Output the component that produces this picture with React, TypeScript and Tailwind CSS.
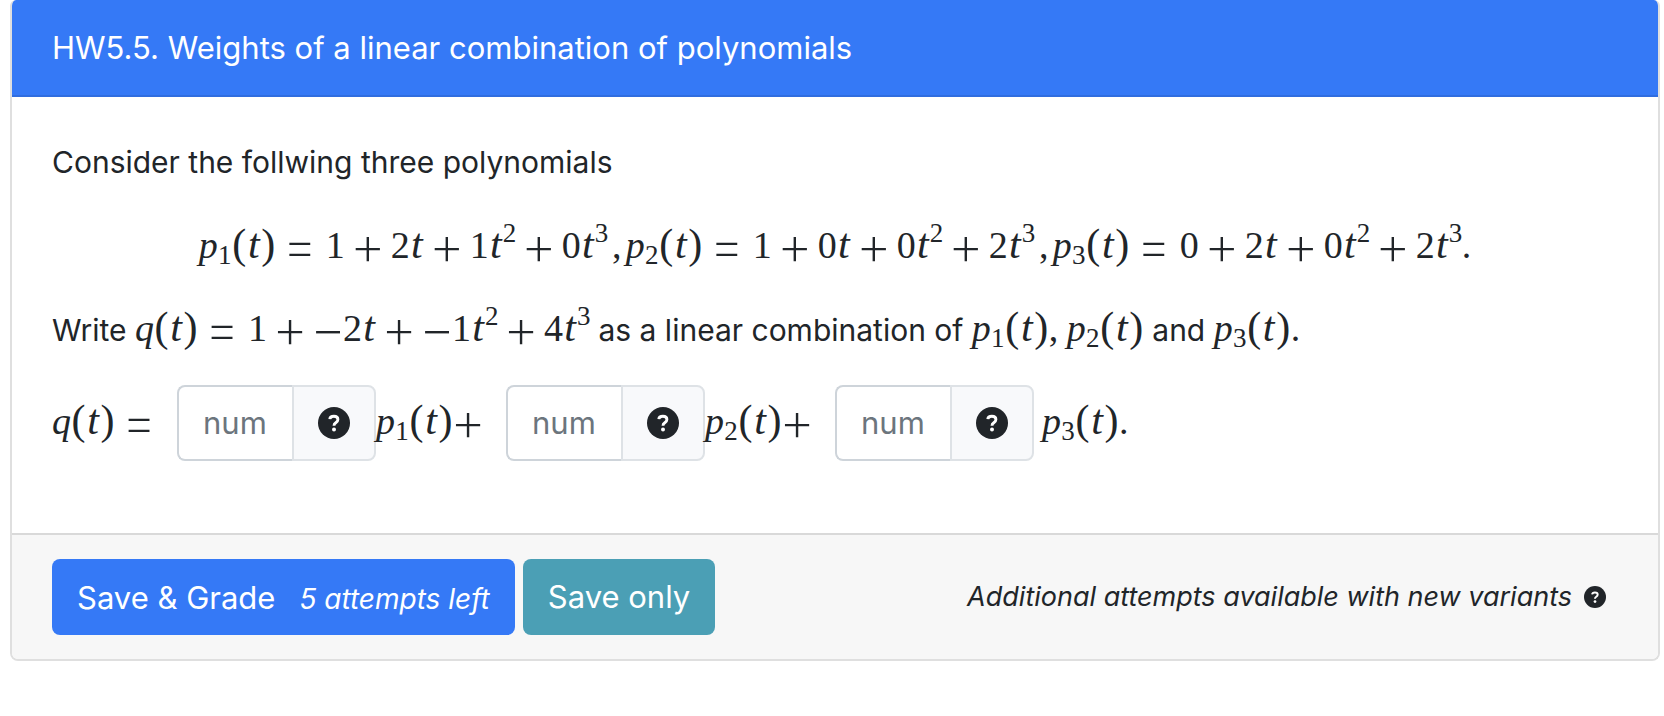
import React from 'react';

// Math glyphs are set in a serif face, each one in a box as wide as its TeX advance
function Digit({ children }: { children: React.ReactNode }) {
  return <span className="inline-block w-[19px] text-center">{children}</span>;
}

function VarT() {
  return <span className="inline-block w-[14px] text-center text-[42px] leading-none italic">t</span>;
}

function Paren({ children }: { children: React.ReactNode }) {
  return <span className="inline-block w-[15px] text-center text-[42px] leading-none">{children}</span>;
}

function Exp({ children }: { children: React.ReactNode }) {
  return <span className="inline-block w-[13px] text-center align-[16px] text-[27px] leading-[18px]">{children}</span>;
}

function Op({ children }: { children: React.ReactNode }) {
  return (
    <span className="-mx-1 inline-block w-[38px] text-center align-[-7px] font-['Inter'] text-[56px] font-extralight leading-[24px]">
      {children}
    </span>
  );
}

function Plus() {
  return <span className="mx-2"><Op>+</Op></span>;
}

function Equals() {
  return <span className="ml-[9px] mr-[11px]"><Op>=</Op></span>;
}

function Fn({ name, sub }: { name: string; sub?: number }) {
  return (
    <>
      <span className="inline-block w-[19px] text-center italic">{name}</span>
      {sub && (
        <span className="inline-block w-[14px] text-center align-[-6px] text-[27px] leading-[18px]">{sub}</span>
      )}
      <Paren>(</Paren>
      <VarT />
      <Paren>)</Paren>
    </>
  );
}

function Coef({ value }: { value: number }) {
  return (
    <>
      {value < 0 && <Op>−</Op>}
      <Digit>{Math.abs(value)}</Digit>
    </>
  );
}

function Poly({ coefs }: { coefs: number[] }) {
  return (
    <>
      {coefs.map((c, i) => (
        <React.Fragment key={i}>
          {i > 0 && <Plus />}
          <Coef value={c} />
          {i > 0 && <VarT />}
          {i > 1 && <Exp>{i}</Exp>}
        </React.Fragment>
      ))}
    </>
  );
}

function Comma() {
  return <span className="inline-block w-[18px]">,</span>;
}

function MathText({ children }: { children: React.ReactNode }) {
  return (
    <span className="mb-1 whitespace-nowrap font-['Liberation_Serif',serif] text-[38px] leading-[48px]">
      {children}
    </span>
  );
}

function HelpIcon({ className }: { className: string }) {
  return (
    <svg viewBox="0 0 32 32" className={className} aria-hidden="true">
      <circle cx="16" cy="16" r="16" fill="#212529" />
      <path
        d="M11.8 12.2C12 10.2 13.6 9.3 15.9 9.3C18.3 9.3 19.9 10.5 19.9 12.5C19.9 14.1 19 14.9 17.8 15.7C16.6 16.5 16 17.1 16 18.7"
        fill="none"
        stroke="#fff"
        strokeWidth="2.9"
      />
      <circle cx="16" cy="22.6" r="2" fill="#fff" />
    </svg>
  );
}

function NumberInput({ label }: { label: string }) {
  return (
    <span className="flex h-[76px] w-[199px]">
      <input
        type="text"
        placeholder="num"
        aria-label={label}
        className="min-w-0 flex-1 rounded-l-lg border-2 border-r-0 border-[#ced4da] bg-white pl-6 text-[31px] placeholder:text-[#6c757d] placeholder:opacity-100"
      />
      <button
        type="button"
        aria-label="Help"
        className="flex w-[84px] items-center justify-center rounded-r-lg border-2 border-[#dee2e6] bg-[#f8f9fb]"
      >
        <HelpIcon className="size-8" />
      </button>
    </span>
  );
}

const polynomials = [
  [1, 2, 1, 0],
  [1, 0, 0, 2],
  [0, 2, 0, 2],
];

export default function App() {
  return (
    <main className="bg-white pb-14 pl-[10px] pr-1 font-['Inter',sans-serif] text-[31px] leading-[48px] text-[#212529]">
      <div className="overflow-hidden rounded-b-lg rounded-t-md border-2 border-t-0 border-[#dfdfdf]">
        <h1 className="border-b-2 border-[#306ddf] bg-[#3579f6] px-10 pb-[23px] pt-6 text-white">
          HW5.5. Weights of a linear combination of polynomials
        </h1>

        <div className="px-10 pb-[72px] pt-[41px] text-[30px]">
          <p>Consider the follwing three polynomials</p>

          <p className="mt-[35px] text-center">
            <MathText>
              {polynomials.map((coefs, i) => (
                <React.Fragment key={i}>
                  <Fn name="p" sub={i + 1} />
                  <Equals />
                  <Poly coefs={coefs} />
                  {i < 2 ? <Comma /> : '.'}
                </React.Fragment>
              ))}
            </MathText>
          </p>

          <p className="mt-[33px]">
            Write{' '}
            <MathText>
              <Fn name="q" />
              <Equals />
              <Poly coefs={[1, -2, -1, 4]} />
            </MathText>{' '}
            as a linear combination of{' '}
            <MathText>
              <Fn name="p" sub={1} />
              <Comma />
              <Fn name="p" sub={2} />
            </MathText>{' '}
            and{' '}
            <MathText>
              <Fn name="p" sub={3} />.
            </MathText>
          </p>

          <div className="mt-[31px] flex items-center">
            <MathText>
              <Fn name="q" />
              <span className="ml-[9px]"><Op>=</Op></span>
            </MathText>
            <span className="w-[23px]" />
            <NumberInput label="Weight of p1" />
            <MathText>
              <Fn name="p" sub={1} />
              <Op>+</Op>
            </MathText>
            <span className="w-[23px]" />
            <NumberInput label="Weight of p2" />
            <MathText>
              <Fn name="p" sub={2} />
              <Op>+</Op>
            </MathText>
            <span className="w-[23px]" />
            <NumberInput label="Weight of p3" />
            <span className="w-2" />
            <MathText>
              <Fn name="p" sub={3} />.
            </MathText>
          </div>
        </div>

        <div className="flex items-center border-t-2 border-[#d9d9d9] bg-[#f7f7f7] px-10 py-6">
          <button type="button" className="flex h-[76px] items-baseline gap-6 rounded-lg bg-[#3579f6] px-[25px] pt-[15px] text-white">
            Save &amp; Grade
            <span className="text-[28px] italic">5 attempts left</span>
          </button>
          <button type="button" className="ml-2 h-[76px] rounded-lg bg-[#4b9fb5] px-[25px] text-white">
            Save only
          </button>
          <span className="ml-auto text-[27px] italic">Additional attempts available with new variants</span>
          <button type="button" aria-label="About variants" className="ml-3 mr-3">
            <HelpIcon className="size-[22px]" />
          </button>
        </div>
      </div>
    </main>
  );
}
